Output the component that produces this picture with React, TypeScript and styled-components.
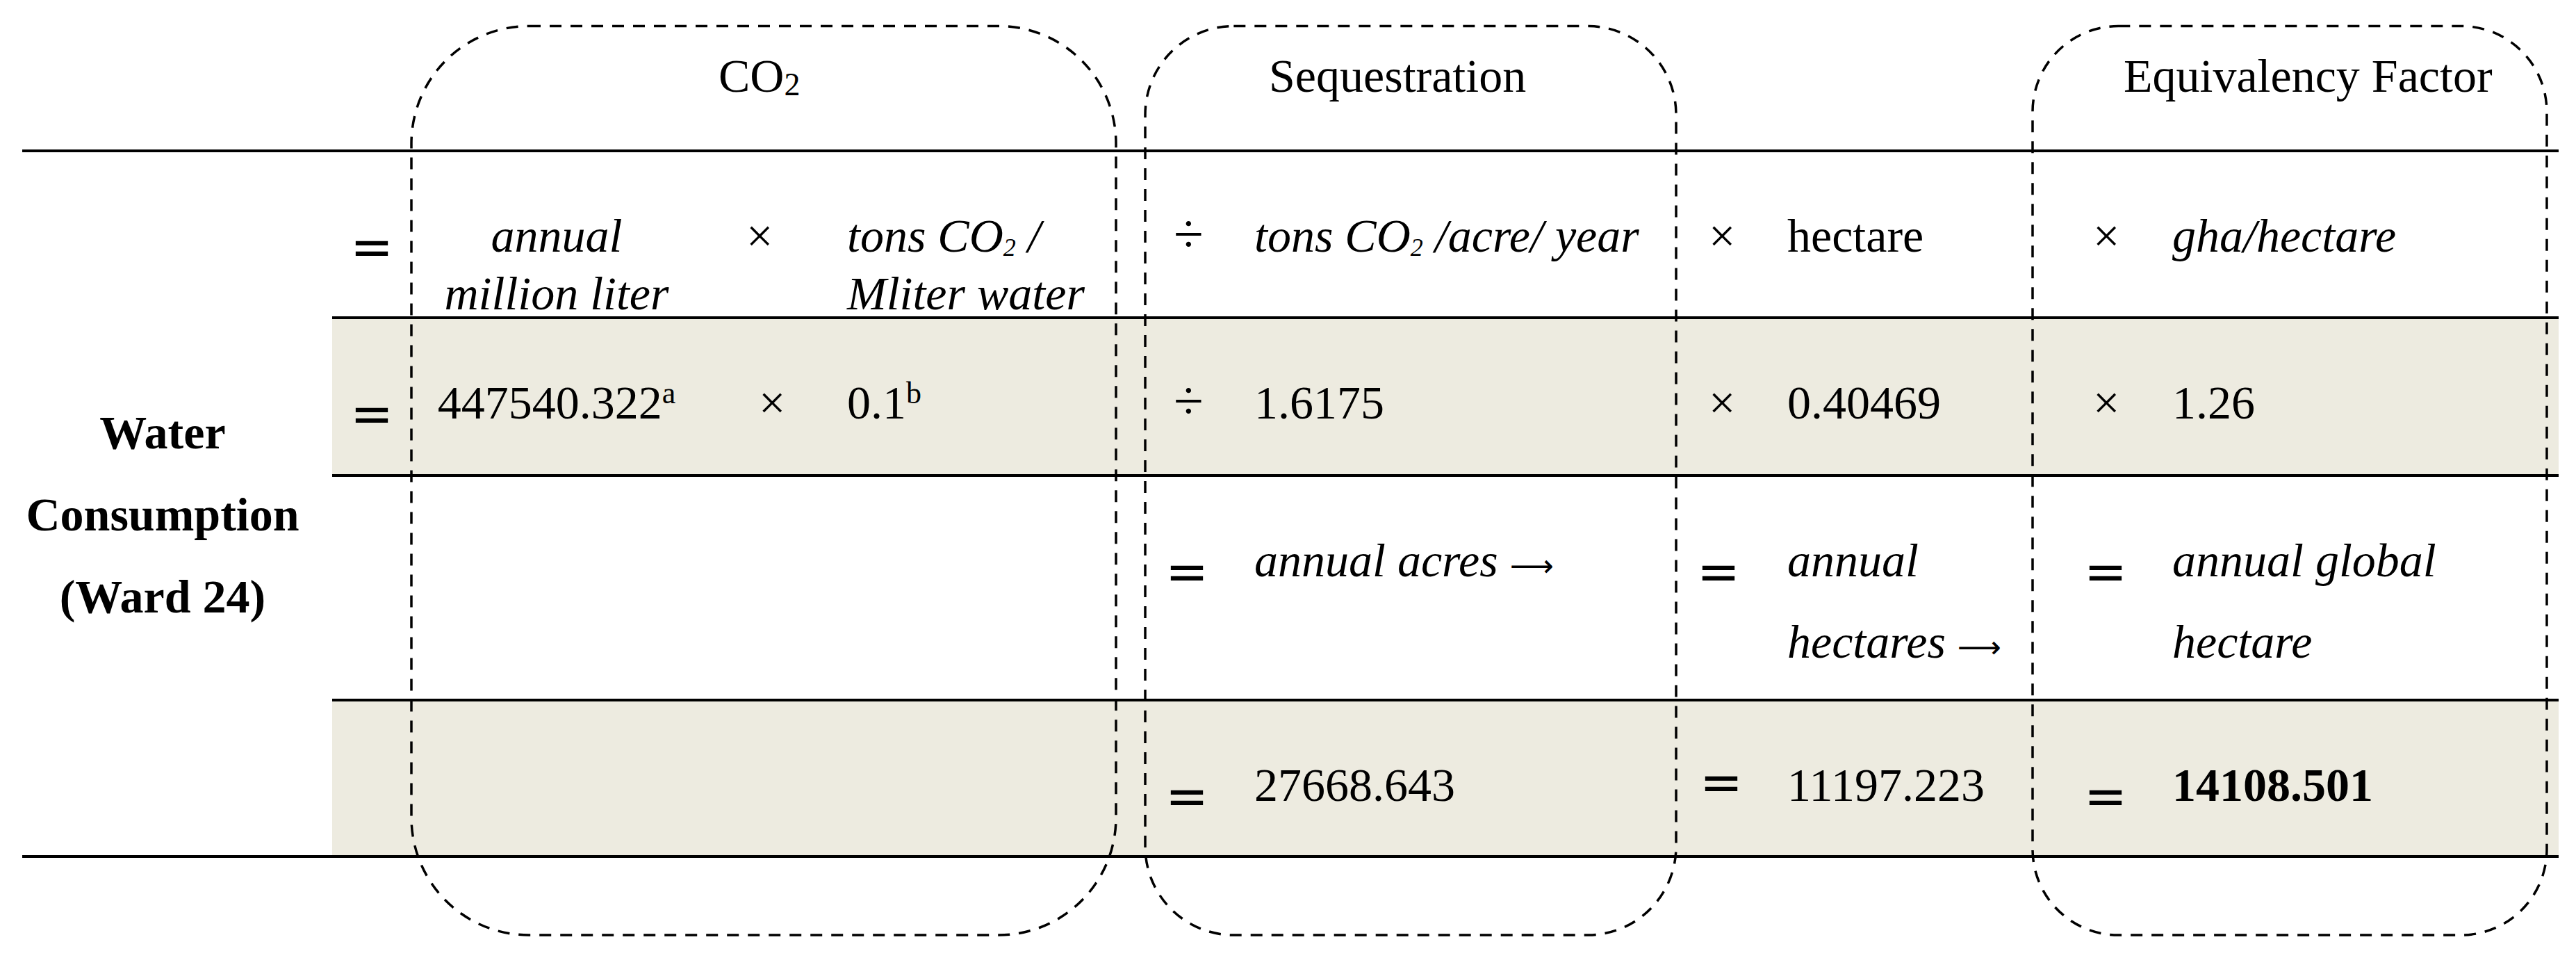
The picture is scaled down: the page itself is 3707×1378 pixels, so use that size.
import React from "react";
import styled, { createGlobalStyle } from "styled-components";

const Global = createGlobalStyle`
  html, body { margin: 0; padding: 0; background: #ffffff; }
  body {
    font-family: "Liberation Serif", "Times New Roman", serif;
    color: #000000;
  }
`;

/* distance from the top of a row's content box to the text baseline */
const BASE = 143;
const SHADE = "#EDEBE0";

const Page = styled.div`
  position: relative;
  width: 3707px;
  height: 1378px;
  overflow: hidden;
  background: #ffffff;
`;

const HeaderBar = styled.div`
  display: grid;
  grid-template-columns: 1034px 792px 1230px 1fr;
  height: 215px;
  box-sizing: border-box;
  padding-top: 69px;
  font-size: 68px;
  line-height: 80px;
  white-space: nowrap;
`;

const HeaderLabel = styled.div<{ $col: number }>`
  grid-column: ${(p) => p.$col};
`;

const Table = styled.div`
  display: flex;
  margin-left: 32px;
  width: 3650px;
  border-top: 4px solid #000;
  border-bottom: 4px solid #000;
`;

const LabelCol = styled.div`
  width: 446px;
  flex: none;
  box-sizing: border-box;
  padding: 344px 42px 0 0;
  text-align: center;
  font-weight: 700;
  font-size: 68px;
  line-height: 118px;
  white-space: nowrap;
`;

const Body = styled.div`
  width: 3204px;
  display: flex;
  flex-direction: column;
`;

const Row = styled.div<{ $h: number; $shaded?: boolean; $ruled?: boolean }>`
  display: grid;
  grid-template-columns: 122px 402px 198px 448px 157px 615px 152px 353px 201px 556px;
  align-items: start;
  height: ${(p) => p.$h}px;
  box-sizing: border-box;
  background: ${(p) => (p.$shaded ? SHADE : "transparent")};
  border-top: ${(p) => (p.$ruled ? "4px solid #000" : "0")};
`;

const Cell = styled.div<{
  $col: number;
  $pl?: number;
  $lh?: number;
  $center?: boolean;
  $italic?: boolean;
  $bold?: boolean;
}>`
  grid-column: ${(p) => p.$col};
  grid-row: 1;
  padding-left: ${(p) => p.$pl ?? 0}px;
  padding-top: ${(p) => BASE - (p.$lh ?? 83) / 2 - 23}px;
  font-size: 68px;
  line-height: ${(p) => p.$lh ?? 83}px;
  text-align: ${(p) => (p.$center ? "center" : "left")};
  font-style: ${(p) => (p.$italic ? "italic" : "normal")};
  font-weight: ${(p) => (p.$bold ? 700 : 400)};
  white-space: nowrap;
`;

/* division sign: drawn a little larger than the text, kept on the same baseline */
const Divide = styled.div<{ $col: number; $pl: number }>`
  grid-column: ${(p) => p.$col};
  grid-row: 1;
  padding-left: ${(p) => p.$pl}px;
  padding-top: ${BASE - 83 / 2 - 26}px;
  font-size: 78px;
  line-height: 83px;
`;

const Eq = styled.div<{ $col: number; $pl: number; $raised?: boolean }>`
  grid-column: ${(p) => p.$col};
  grid-row: 1;
  padding-left: ${(p) => p.$pl}px;
  padding-top: ${(p) => (p.$raised ? 79 : 99)}px;
  font-family: "DejaVu Sans", sans-serif;
  font-size: 74px;
  line-height: 74px;
`;

const Sub = styled.span<{ $size: number; $drop: number }>`
  font-size: ${(p) => p.$size}px;
  vertical-align: -${(p) => p.$drop}px;
  line-height: 0;
`;

const Sup = styled.span`
  font-size: 44px;
  vertical-align: 22px;
  line-height: 0;
  font-style: normal;
`;

/* long, thin rightwards arrow */
const Arrow = styled.span`
  font-family: "DejaVu Sans", sans-serif;
  font-style: normal;
  font-size: 44px;
  line-height: 0;
`;

const Overlay = styled.svg`
  position: absolute;
  left: 0;
  top: 0;
  width: 3707px;
  height: 1378px;
  pointer-events: none;
`;

const boxes = [
  { x: 592, w: 1014 },
  { x: 1648, w: 764 },
  { x: 2925, w: 740 },
];

const CO2 = ({ size, drop }: { size: number; drop: number }) => (
  <>
    CO<Sub $size={size} $drop={drop}>2</Sub>
  </>
);

export default function App() {
  return (
    <>
      <Global />
      <Page>
        <HeaderBar>
          <HeaderLabel $col={2}>
            <CO2 size={46} drop={5} />
          </HeaderLabel>
          <HeaderLabel $col={3}>Sequestration</HeaderLabel>
          <HeaderLabel $col={4}>Equivalency Factor</HeaderLabel>
        </HeaderBar>

        <Table>
          <LabelCol>
            Water
            <br />
            Consumption
            <br />
            (Ward 24)
          </LabelCol>

          <Body>
            <Row $h={236}>
              <Eq $col={1} $pl={26}>=</Eq>
              <Cell $col={2} $center $italic>
                annual
                <br />
                million liter
              </Cell>
              <Cell $col={3} $pl={72}>×</Cell>
              <Cell $col={4} $pl={19} $italic>
                tons <CO2 size={36} drop={6} /> /
                <br />
                Mliter water
              </Cell>
              <Divide $col={5} $pl={41}>÷</Divide>
              <Cell $col={6} $italic>
                tons <CO2 size={36} drop={6} /> /acre/ year
              </Cell>
              <Cell $col={7} $pl={39}>×</Cell>
              <Cell $col={8}>hectare</Cell>
              <Cell $col={9} $pl={87}>×</Cell>
              <Cell $col={10} $italic>gha/hectare</Cell>
            </Row>

            <Row $h={227} $shaded $ruled>
              <Eq $col={1} $pl={26}>=</Eq>
              <Cell $col={2} $center>
                447540.322<Sup>a</Sup>
              </Cell>
              <Cell $col={3} $pl={90}>×</Cell>
              <Cell $col={4} $pl={19}>
                0.1<Sup>b</Sup>
              </Cell>
              <Divide $col={5} $pl={41}>÷</Divide>
              <Cell $col={6}>1.6175</Cell>
              <Cell $col={7} $pl={39}>×</Cell>
              <Cell $col={8}>0.40469</Cell>
              <Cell $col={9} $pl={87}>×</Cell>
              <Cell $col={10}>1.26</Cell>
            </Row>

            <Row $h={323} $ruled>
              <Eq $col={5} $pl={29}>=</Eq>
              <Cell $col={6} $lh={117} $italic>
                annual acres <Arrow>⟶</Arrow>
              </Cell>
              <Eq $col={7} $pl={22}>=</Eq>
              <Cell $col={8} $lh={117} $italic>
                annual
                <br />
                hectares <Arrow>⟶</Arrow>
              </Cell>
              <Eq $col={9} $pl={74}>=</Eq>
              <Cell $col={10} $lh={117} $italic>
                annual global
                <br />
                hectare
              </Cell>
            </Row>

            <Row $h={225} $shaded $ruled>
              <Eq $col={5} $pl={29}>=</Eq>
              <Cell $col={6}>27668.643</Cell>
              <Eq $col={7} $pl={26} $raised>=</Eq>
              <Cell $col={8}>11197.223</Cell>
              <Eq $col={9} $pl={74}>=</Eq>
              <Cell $col={10} $bold>14108.501</Cell>
            </Row>
          </Body>
        </Table>

        <Overlay viewBox="0 0 3707 1378">
          {boxes.map((b) => (
            <rect
              key={b.x}
              x={b.x}
              y={37.5}
              width={b.w}
              height={1307.5}
              rx={b.w / 6}
              ry={b.w / 6}
              fill="none"
              stroke="#000"
              strokeWidth={3.5}
              strokeDasharray="17 13"
            />
          ))}
        </Overlay>
      </Page>
    </>
  );
}
